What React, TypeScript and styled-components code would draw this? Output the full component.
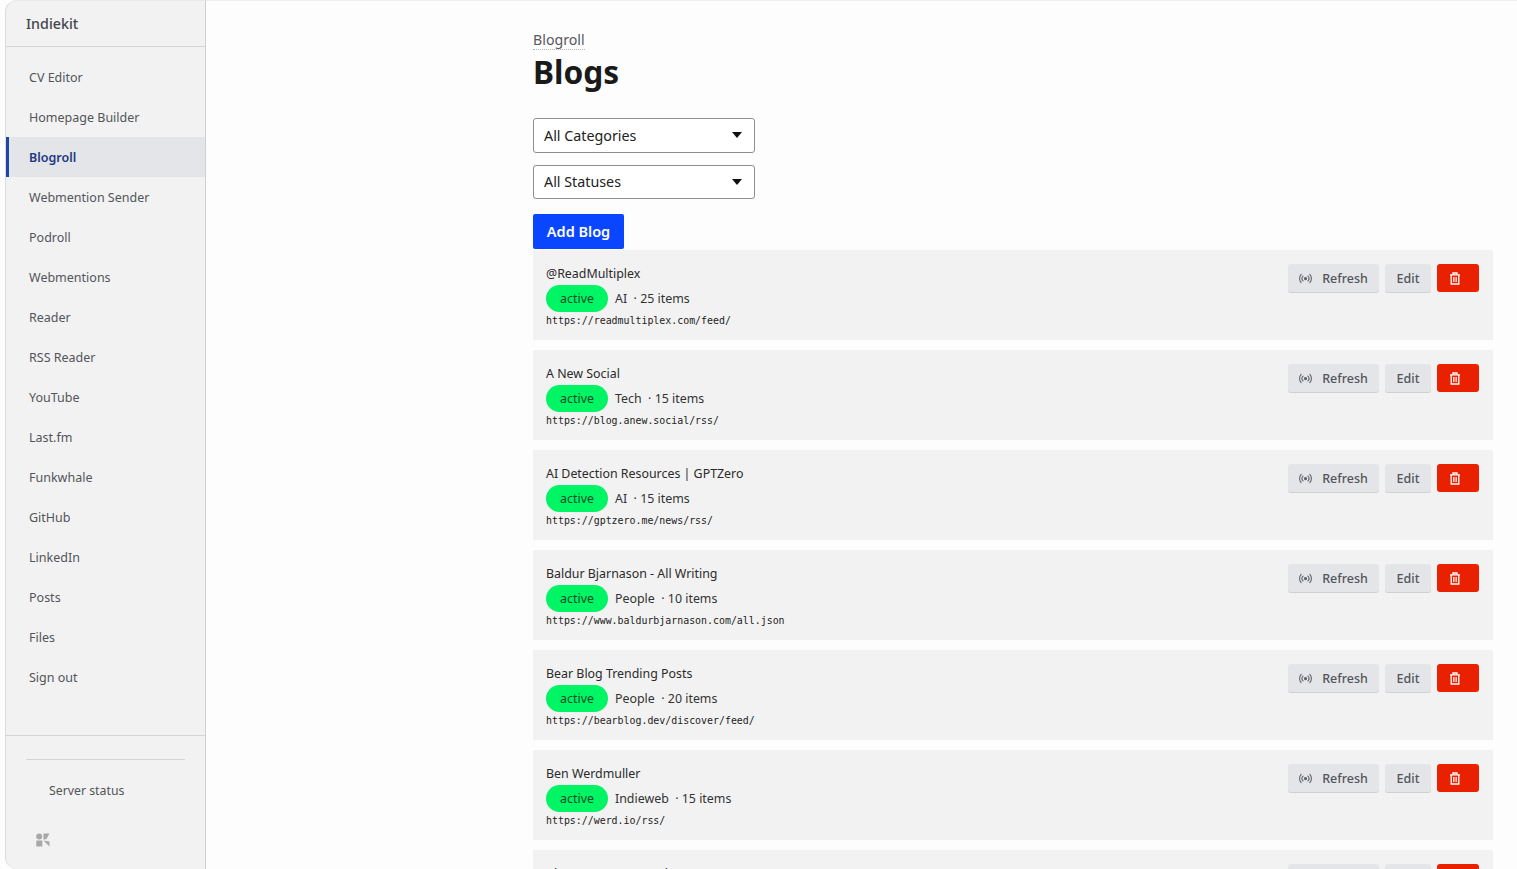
import React from 'react';
import styled, { createGlobalStyle } from 'styled-components';

const GlobalStyle = createGlobalStyle`
  html, body {
    margin: 0;
    height: 100%;
    overflow: hidden;
    background: #fdfdfd;
  }
  body {
    font-family: "Noto Sans", "Open Sans", sans-serif;
    color: #1c1c1c;
  }
`;

const Shell = styled.div`
  display: flex;
  height: 869px;
  overflow: hidden;
  padding-left: 5px;
  box-sizing: border-box;
`;

const Sidebar = styled.aside`
  width: 201px;
  flex: none;
  display: flex;
  flex-direction: column;
  box-sizing: border-box;
  background: #f2f2f2;
  border-left: 1px solid #dcdcdc;
  border-right: 1px solid #cfcfcf;
  border-top: 1px solid #e8e8e8;
  border-radius: 12px 0 0 12px;
`;

const Brand = styled.div`
  height: 46px;
  box-sizing: border-box;
  flex: none;
  display: flex;
  align-items: center;
  padding: 0 0 1px 20px;
  border-bottom: 1px solid #d4d4d4;
  font-size: 14.3px;
  font-weight: 500;
  color: #44474c;
`;

const Nav = styled.nav`
  flex: 1;
  padding-top: 10px;
`;

const NavItem = styled.a<{ $active?: boolean }>`
  display: flex;
  align-items: center;
  height: 40px;
  box-sizing: border-box;
  padding-left: ${p => (p.$active ? '20px' : '23px')};
  border-left: ${p => (p.$active ? '3px solid #1e46a8' : 'none')};
  background: ${p => (p.$active ? '#e3e5e8' : 'transparent')};
  color: ${p => (p.$active ? '#1f3a82' : '#52555a')};
  font-size: 12.5px;
  font-weight: ${p => (p.$active ? 600 : 400)};
`;

const SideFooter = styled.div`
  flex: none;
  height: 134px;
  box-sizing: border-box;
  border-top: 1px solid #d4d4d4;
  padding: 23px 20px 0;
`;

const FooterRule = styled.div`
  border-top: 1px solid #d4d4d4;
`;

const StatusLink = styled.div`
  padding: 22px 0 0 23px;
  font-size: 12.3px;
  line-height: 17px;
  color: #52555a;
`;

const FooterLogo = styled.svg`
  display: block;
  margin: 34px 0 0 10px;
`;

const Main = styled.main`
  flex: 1;
  min-width: 0;
  padding: 27px 24px 0 327px;
  border-top: 1px solid #eeeeee;
`;

const Breadcrumb = styled.a`
  display: inline-block;
  font-size: 14.2px;
  line-height: 18px;
  color: #56595e;
  border-bottom: 1px dotted #b5b5b5;
`;

const Title = styled.h1`
  margin: 0;
  font-size: 31.7px;
  line-height: 44px;
  font-weight: 700;
  color: #1a1a1a;
`;

const FilterSelect = styled.div`
  width: 222px;
  height: 34.5px;
  box-sizing: border-box;
  display: flex;
  align-items: center;
  justify-content: space-between;
  padding: 0 12px 0 10px;
  margin-bottom: 12px;
  background: #fff;
  border: 1px solid #8f8f8f;
  border-radius: 3px;
  font-size: 14.3px;
  color: #222;
  &::after {
    content: '';
    width: 0;
    height: 0;
    border-left: 5.5px solid transparent;
    border-right: 5.5px solid transparent;
    border-top: 6px solid #111;
  }
`;

const Filters = styled.div`
  margin-top: 24px;
`;

const AddButton = styled.button`
  display: block;
  width: 91px;
  height: 35px;
  margin: 15px 0 1px;
  padding: 0 0 2px;
  border: none;
  border-radius: 2px;
  background: #0a46ff;
  color: #fff;
  font: 600 14.5px "Noto Sans", sans-serif;
`;

const BlogList = styled.div`
  display: flex;
  flex-direction: column;
  gap: 10px;
`;

const BlogCard = styled.article`
  height: 90px;
  flex: none;
  box-sizing: border-box;
  display: flex;
  justify-content: space-between;
  padding: 14px 14px 0 13px;
  background: #f2f2f2;
`;

const BlogName = styled.div`
  margin-top: 1px;
  font-size: 12.4px;
  line-height: 18px;
  color: #2a2a2a;
`;

const MetaRow = styled.div`
  display: flex;
  align-items: center;
  margin-top: 2px;
  font-size: 12.4px;
  line-height: 17px;
  color: #333;
`;

const StatusPill = styled.span`
  width: 62px;
  height: 27px;
  margin-right: 7px;
  display: flex;
  align-items: center;
  justify-content: center;
  border-radius: 14px;
  background: #00f564;
  color: #14492b;
`;

const FeedUrl = styled.div`
  margin-top: 1px;
  font-family: "DejaVu Sans Mono", "Liberation Mono", monospace;
  font-size: 9.92px;
  line-height: 15px;
  color: #222;
`;

const Actions = styled.div`
  display: flex;
  gap: 6px;
  height: 28px;
`;

const ActionButton = styled.button<{ $wide?: boolean }>`
  height: 28px;
  width: ${p => (p.$wide ? '91px' : '46px')};
  padding: 0;
  display: flex;
  align-items: center;
  justify-content: center;
  gap: 10px;
  border: none;
  border-radius: 3px;
  background: #e3e5e8;
  box-shadow: 0 1px 0 #d0d0d0;
  color: #52555a;
  font: 500 12.5px "Noto Sans", sans-serif;
`;

const DeleteButton = styled.button`
  width: 42px;
  height: 28px;
  padding: 0 6px 0 0;
  display: flex;
  align-items: center;
  justify-content: center;
  border: none;
  border-radius: 3px;
  background: #e92100;
`;

const links = [
  'CV Editor',
  'Homepage Builder',
  'Blogroll',
  'Webmention Sender',
  'Podroll',
  'Webmentions',
  'Reader',
  'RSS Reader',
  'YouTube',
  'Last.fm',
  'Funkwhale',
  'GitHub',
  'LinkedIn',
  'Posts',
  'Files',
  'Sign out',
];

const blogs = [
  { name: '@ReadMultiplex', category: 'AI', items: 25, url: 'https://readmultiplex.com/feed/' },
  { name: 'A New Social', category: 'Tech', items: 15, url: 'https://blog.anew.social/rss/' },
  { name: 'AI Detection Resources | GPTZero', category: 'AI', items: 15, url: 'https://gptzero.me/news/rss/' },
  { name: 'Baldur Bjarnason - All Writing', category: 'People', items: 10, url: 'https://www.baldurbjarnason.com/all.json' },
  { name: 'Bear Blog Trending Posts', category: 'People', items: 20, url: 'https://bearblog.dev/discover/feed/' },
  { name: 'Ben Werdmuller', category: 'Indieweb', items: 15, url: 'https://werd.io/rss/' },
  { name: 'Bloom Press Network', category: 'Tech', items: 15, url: 'https://bloompress.example/feed/' },
];

const BroadcastIcon = () => (
  <svg width="13" height="13" viewBox="0 0 24 24" fill="none" stroke="#5f6368" strokeWidth="2" strokeLinecap="round">
    <circle cx="12" cy="12" r="2" fill="#5f6368" />
    <path d="M7.5 7.5a6.5 6.5 0 0 0 0 9M16.5 7.5a6.5 6.5 0 0 1 0 9M4 4.5a11 11 0 0 0 0 15M20 4.5a11 11 0 0 1 0 15" />
  </svg>
);

const TrashIcon = () => (
  <svg width="12" height="13" viewBox="0 0 12 13" fill="none" stroke="#fff" strokeWidth="1.3">
    <path d="M1 2.8h10M4 2.8V1h4v1.8M2.2 2.8V12h7.6V2.8M4.8 5v5M7.2 5v5" />
  </svg>
);

const App = () => {
  return (
    <Shell>
      <GlobalStyle />
      <Sidebar>
        <Brand>Indiekit</Brand>
        <Nav>
          {links.map(link => (
            <NavItem key={link} $active={link === 'Blogroll'}>
              {link}
            </NavItem>
          ))}
        </Nav>
        <SideFooter>
          <FooterRule />
          <StatusLink>Server status</StatusLink>
          <FooterLogo width="14" height="14" viewBox="0 0 14 14" fill="#a8a8a8">
            <circle cx="3.2" cy="3.4" r="3" />
            <rect x="0.3" y="7.5" width="6" height="6" />
            <path d="M7.5 0.5h6l-3 5.5-3 0.8zM7.5 7.5l6 1v5z" />
          </FooterLogo>
        </SideFooter>
      </Sidebar>
      <Main>
        <Breadcrumb>Blogroll</Breadcrumb>
        <Title>Blogs</Title>
        <Filters>
          <FilterSelect>All Categories</FilterSelect>
          <FilterSelect>All Statuses</FilterSelect>
        </Filters>
        <AddButton>Add Blog</AddButton>
        <BlogList>
          {blogs.map(blog => (
            <BlogCard key={blog.name}>
              <div>
                <BlogName>{blog.name}</BlogName>
                <MetaRow>
                  <StatusPill>active</StatusPill>
                  {blog.category}&nbsp; · {blog.items} items
                </MetaRow>
                <FeedUrl>{blog.url}</FeedUrl>
              </div>
              <Actions>
                <ActionButton $wide>
                  <BroadcastIcon />
                  Refresh
                </ActionButton>
                <ActionButton>Edit</ActionButton>
                <DeleteButton>
                  <TrashIcon />
                </DeleteButton>
              </Actions>
            </BlogCard>
          ))}
        </BlogList>
      </Main>
    </Shell>
  );
};

export default App;
